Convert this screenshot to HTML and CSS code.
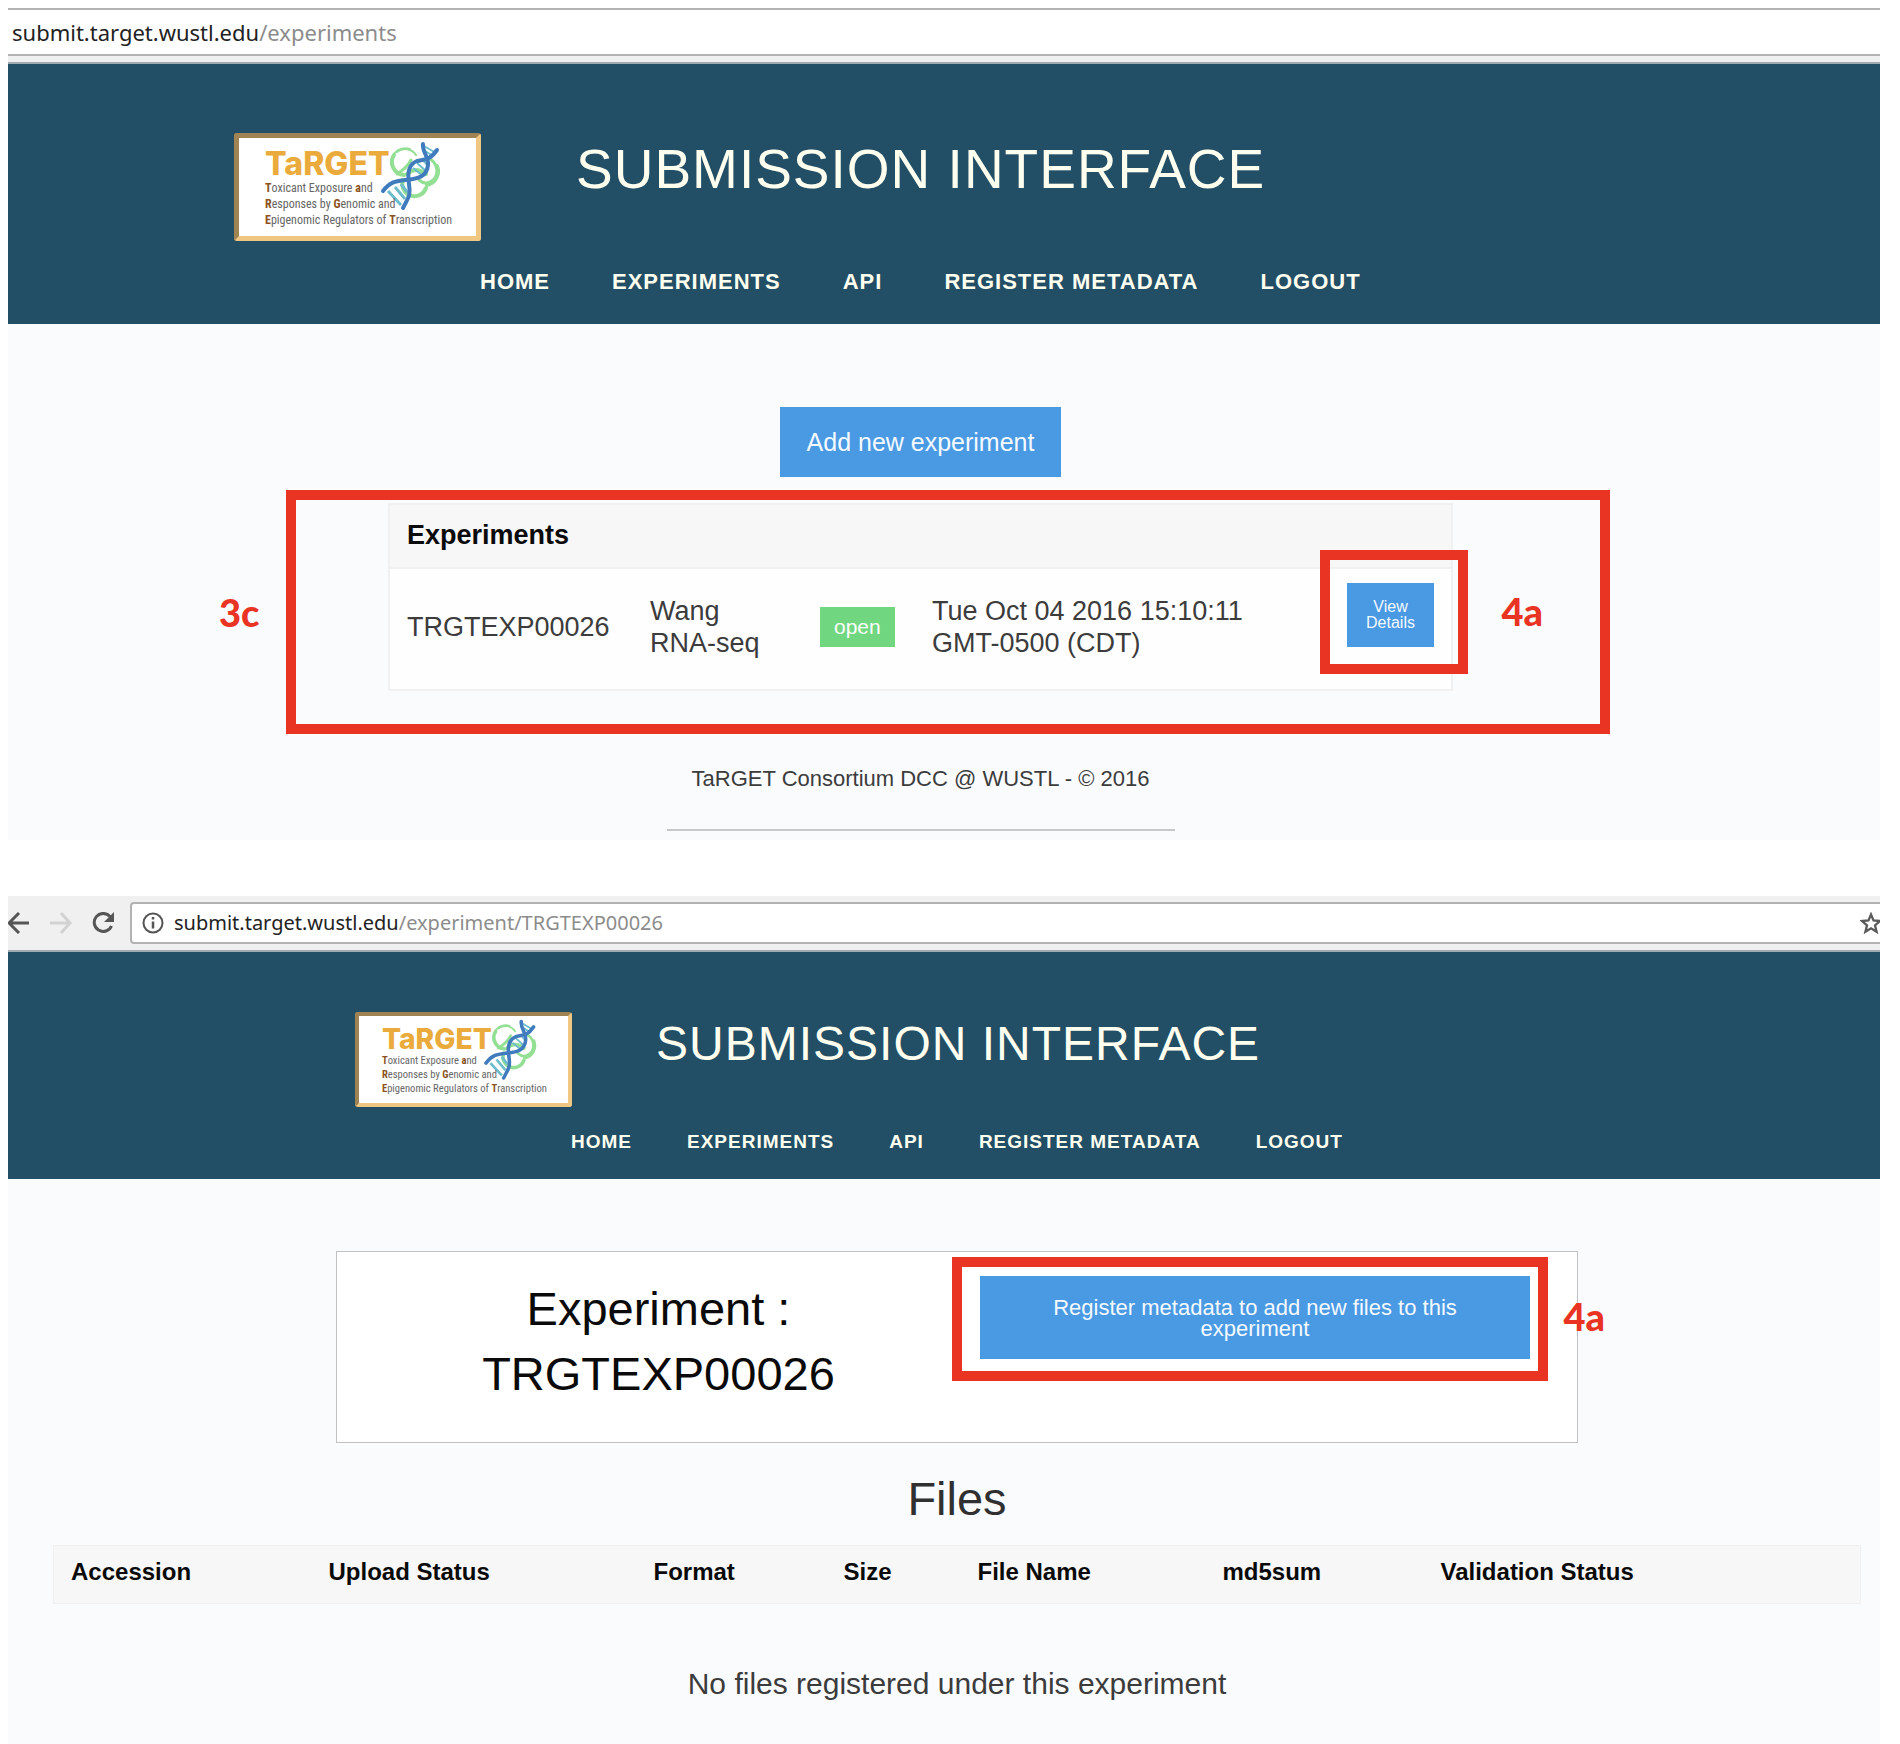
FILE: index.html
```html
<!DOCTYPE html>
<html lang="en">
<head>
<meta charset="utf-8">
<title>TaRGET Submission Interface</title>
<link rel="stylesheet" href="styles.css">
</head>
<body>
<svg class="defs" aria-hidden="true">
  <symbol id="helix" viewBox="0 0 237 98">
    <g fill="none" stroke="#93e094" stroke-linecap="round">
      <path d="M154 31A14 14 0 0 1 171 11" stroke-width="2"/>
      <path d="M155 17A13 13 0 0 0 165 37" stroke-width="4"/>
      <path d="M158 14A13 13 0 0 1 177 17" stroke-width="2"/>
      <path d="M158 36Q168 30 172 22" stroke-width="3"/>
      <path d="M191 21A14 14 0 0 1 196 40Q188 49 180 42" stroke-width="3"/>
      <path d="M198 28A14 14 0 0 1 188 47" stroke-width="4"/>
      <path d="M164 42A12 12 0 1 0 187 50" stroke-width="4"/>
      <path d="M168 36Q177 28 187 36" stroke-width="4"/>
    </g>
    <g stroke="#6cbccb" stroke-width="3">
      <path d="M149 53L162 67M156 49L166 61M162 46L168 54"/>
      <path d="M174 30L184 38M178 25L188 34M184 22L189 28" stroke-width="2"/>
      <path d="M185 8L197 15M186 13L194 18" stroke-width="2"/>
    </g>
    <g fill="none" stroke="#3f7bbd" stroke-width="4" stroke-linecap="round">
      <path d="M144 53C152 43 158 43 166 42C180 41 188 38 189 27C190 19 183 14 184 6"/>
      <path d="M164 70C169 60 172 58 170 46C168 34 170 26 178 23C187 21 191 22 198 12"/>
    </g>
  </symbol>
</svg>

<section class="window list-window">
  <div class="toolbar">
    <div class="address"><span>submit.target.wustl.edu<span class="path">/experiments</span></span></div>
  </div>
  <header class="site-header">
    <div class="brand">
      <svg class="logo" viewBox="0 0 237 98">
        <use href="#helix"/>
        <text class="logo-name" x="26" y="37">TaRGET</text>
        <g class="logo-words">
          <text x="26" y="54"><tspan class="ini">T</tspan>oxicant Exposure <tspan class="ini">a</tspan>nd</text>
          <text x="26" y="70"><tspan class="ini">R</tspan>esponses by <tspan class="ini">G</tspan>enomic and</text>
          <text x="26" y="86"><tspan class="ini">E</tspan>pigenomic Regulators of <tspan class="ini">T</tspan>ranscription</text>
        </g>
      </svg>
      <h1>SUBMISSION INTERFACE</h1>
    </div>
    <nav>
      <a href="#">HOME</a><a href="#">EXPERIMENTS</a><a href="#">API</a><a href="#">REGISTER METADATA</a><a href="#">LOGOUT</a>
    </nav>
  </header>
  <main class="list-page">
    <button class="btn btn-add" type="button">Add new experiment</button>
    <div class="experiments">
      <table class="exp-table">
        <colgroup><col class="c-id"><col class="c-lab"><col class="c-state"><col class="c-date"><col class="c-act"></colgroup>
        <thead><tr><th colspan="5">Experiments</th></tr></thead>
        <tbody>
          <tr>
            <td>TRGTEXP00026</td>
            <td>Wang<br>RNA-seq</td>
            <td><span class="badge">open</span></td>
            <td>Tue Oct 04 2016 15:10:11<br>GMT-0500 (CDT)</td>
            <td class="action"><button class="btn btn-view" type="button">View<br>Details</button></td>
          </tr>
        </tbody>
      </table>
      <div class="frame frame-list"></div>
      <div class="frame frame-view"></div>
      <span class="mark mark-list">3c</span>
      <span class="mark mark-view">4a</span>
    </div>
    <footer>TaRGET Consortium DCC @ WUSTL - © 2016</footer>
    <hr>
  </main>
</section>

<section class="window detail-window">
  <div class="toolbar">
    <button class="tool" type="button" aria-label="Back"><svg viewBox="0 0 22 22"><path d="M21 11H2M11 1L1 11L11 21" fill="none" stroke="#555" stroke-width="3"/></svg></button>
    <button class="tool" type="button" aria-label="Forward"><svg viewBox="0 0 22 22"><path d="M0 11H19M11 1L20 11L11 21" fill="none" stroke="#d2d2d2" stroke-width="3"/></svg></button>
    <button class="tool" type="button" aria-label="Reload"><svg viewBox="0 0 22 22"><path d="M18 4.500A9 9 0 1 0 19.500 14" fill="none" stroke="#555" stroke-width="3"/><path d="M22 0V10H12Z" fill="#555"/></svg></button>
    <div class="address">
      <svg class="info" viewBox="0 0 22 22"><circle cx="11" cy="11" r="9.500" fill="none" stroke="#555" stroke-width="2"/><path d="M11 9.500V16.500M11 5V7.500" stroke="#555" stroke-width="2.500"/></svg>
      <span>submit.target.wustl.edu<span class="path">/experiment/TRGTEXP00026</span></span>
      <svg class="star" viewBox="0 0 22 22"><path d="M11 2.500L13.500 8.500L20 9L15 13.300L16.600 19.800L11 16.300L5.400 19.800L7 13.300L2 9L8.500 8.500Z" fill="none" stroke="#5a5a5a" stroke-width="2.300"/></svg>
    </div>
  </div>
  <header class="site-header">
    <div class="brand">
      <svg class="logo" viewBox="0 0 237 98">
        <use href="#helix"/>
        <text class="logo-name" x="26" y="37">TaRGET</text>
        <g class="logo-words">
          <text x="26" y="54"><tspan class="ini">T</tspan>oxicant Exposure <tspan class="ini">a</tspan>nd</text>
          <text x="26" y="70"><tspan class="ini">R</tspan>esponses by <tspan class="ini">G</tspan>enomic and</text>
          <text x="26" y="86"><tspan class="ini">E</tspan>pigenomic Regulators of <tspan class="ini">T</tspan>ranscription</text>
        </g>
      </svg>
      <h1>SUBMISSION INTERFACE</h1>
    </div>
    <nav>
      <a href="#">HOME</a><a href="#">EXPERIMENTS</a><a href="#">API</a><a href="#">REGISTER METADATA</a><a href="#">LOGOUT</a>
    </nav>
  </header>
  <main class="detail-page">
    <div class="summary">
      <h2>Experiment :<br>TRGTEXP00026</h2>
      <div class="register">
        <button class="btn btn-register" type="button">Register metadata to add new files to this<br>experiment</button>
        <div class="frame frame-register"></div>
        <span class="mark mark-register">4a</span>
      </div>
    </div>
    <h2 class="files-title">Files</h2>
    <table class="files-table">
      <colgroup><col class="f-acc"><col class="f-up"><col class="f-fmt"><col class="f-size"><col class="f-name"><col class="f-md5"><col></colgroup>
      <thead><tr><th>Accession</th><th>Upload Status</th><th>Format</th><th>Size</th><th>File Name</th><th>md5sum</th><th>Validation Status</th></tr></thead>
    </table>
    <p class="empty">No files registered under this experiment</p>
  </main>
</section>
</body>
</html>
```
FILE: styles.css
```css
* { box-sizing: border-box; }

body {
  margin: 0;
  padding: 8px 20px 0 8px;
  background: #fff;
  color: #3c3c3c;
  font-family: "Liberation Sans", Arial, sans-serif;
}

h1, h2, p { margin: 0; font-weight: 400; }

button { border: 0; padding: 0; font-family: inherit; }

.defs { display: block; width: 0; height: 0; }

.window { overflow: hidden; background: #fafbfd; }

/* browser bar */
.toolbar {
  display: flex;
  background: #f0f0f0;
  border-bottom: 2px solid #9fabb1;
}

.address {
  flex: 1;
  display: flex;
  align-items: center;
  background: #fff;
  border: 2px solid #b2b2b2;
  color: #222;
  font-family: "Noto Sans", "Open Sans", sans-serif;
  white-space: nowrap;
}

.path { color: #8c8c8c; }

.list-window .toolbar { padding-bottom: 6px; }

.list-window .address {
  height: 48px;
  padding-left: 4px;
  border-width: 2px 0;
  font-size: 22px;
}

.detail-window { margin-top: 56px; }

.detail-window .toolbar {
  height: 56px;
  padding: 6px 0 7px;
  align-items: center;
}

.tool {
  width: 22px;
  height: 22px;
  margin-right: 20px;
  background: none;
}

.tool svg, .info, .star { display: block; width: 22px; height: 22px; }

.detail-window .address {
  height: 42px;
  margin-left: -4px;
  margin-right: -4px;
  padding-left: 10px;
  gap: 10px;
  border-radius: 4px;
  font-size: 20px;
}

.star { margin-left: auto; }

/* site header */
.site-header { background: #224e66; color: #fffff0; }

.brand { display: flex; align-items: flex-start; }

.logo {
  flex: none;
  border-style: solid;
  border-color: #9f8353 #efc783 #efc783 #9f8353;
  border-radius: 3px;
  background: #fff;
}

.logo-name {
  font: 800 32px Inter, sans-serif;
  fill: #eaab3c;
}

.logo-words {
  font: 12px "Liberation Sans Narrow", "Roboto Condensed", "Liberation Sans", sans-serif;
  fill: #666;
}

.ini { font-weight: 700; fill: #8a5220; }

nav { display: flex; font-weight: 700; letter-spacing: 1px; }

nav a { color: inherit; text-decoration: none; }

h1 { letter-spacing: 1px; white-space: nowrap; }

.list-window .site-header { padding: 69px 0 29px 226px; }
.list-window .logo { width: 247px; height: 108px; border-width: 5px; }
.list-window .brand { gap: 95px; }
.list-window h1 { font-size: 55px; line-height: 72px; }
.list-window nav { gap: 62px; margin: 28px 0 0 246px; font-size: 22px; line-height: 26px; }

.detail-window .site-header { padding: 60px 0 26px 347px; }
.detail-window .logo { width: 217px; height: 95px; border-width: 4px; }
.detail-window .brand { gap: 84px; }
.detail-window h1 { font-size: 48px; line-height: 64px; }
.detail-window nav { gap: 55px; margin: 24px 0 0 216px; font-size: 19px; line-height: 22px; }

.btn { background: #4a9ae3; color: #f4f9ff; }

/* experiment list */
.list-page {
  display: flex;
  flex-direction: column;
  align-items: center;
  padding: 83px 47px 9px 0;
}

.btn-add { padding: 0 27px; height: 70px; font-size: 25px; }

.experiments { position: relative; width: 1065px; margin-top: 26px; }

table { width: 100%; border-collapse: collapse; table-layout: fixed; }

th { background: #f7f7f7; color: #0a0a0a; text-align: left; }

.exp-table { background: #fefefe; font-size: 27px; line-height: 32px; }
.exp-table th { padding: 0 0 2px 17px; }
.exp-table td { padding: 0 0 4px 17px; }
.exp-table thead tr { height: 64px; }
.exp-table tbody tr { height: 122px; }
.exp-table, .exp-table thead { border: 2px solid #f1f1f1; }

.c-id { width: 244px; }
.c-lab { width: 170px; }
.c-state { width: 112px; }
.c-date { width: 415px; }

.badge {
  display: inline-block;
  padding: 4px 14px;
  background: #70d67f;
  color: #fefefe;
  font-size: 21px;
}

.exp-table .action { padding-top: 14px; vertical-align: top; }

.btn-view { display: block; width: 87px; height: 64px; font-size: 16px; line-height: 16px; }

footer { margin-top: 75px; font-size: 22px; line-height: 26px; }

hr { width: 508px; height: 2px; margin: 37px 0 0; border: 0; background: #c6c8ca; }

/* callouts drawn over the pages */
.frame { position: absolute; border: 10px solid #e93323; pointer-events: none; }

.mark {
  position: absolute;
  color: #e93323;
  font: 900 38px/44px Lato, sans-serif;
}

.frame-list { inset: -13px -157px -43px -102px; }
.frame-view { top: 47px; right: -15px; width: 148px; height: 124px; }
.mark-list { top: 87px; left: -169px; }
.mark-view { top: 86px; right: -90px; }
.frame-register { inset: -19px -18px -22px -28px; }
.mark-register { top: 18px; right: -75px; }

/* experiment detail */
.detail-page { padding: 72px 19px 42px 45px; }

.summary {
  display: grid;
  grid-template-columns: 643px 1fr;
  align-items: start;
  max-width: 1242px;
  margin: 0 auto;
  padding: 24px 47px 36px 0;
  border: 1px solid #bfc1c3;
  background: #fff;
}

.summary h2 { color: #0a0a0a; font-size: 47px; line-height: 65px; text-align: center; }

.register { position: relative; }

.btn-register { display: block; width: 100%; height: 83px; font-size: 22px; line-height: 21px; }

.files-title { margin: 24px 0 14px; font-size: 47px; line-height: 64px; color: #303030; text-align: center; }

.files-table { border: 1px solid #f0f0f1; font-size: 24px; line-height: 28px; }
.files-table th { padding: 12px 0 17px 17px; }

.f-acc { width: 258px; }
.f-up { width: 325px; }
.f-fmt { width: 190px; }
.f-size { width: 134px; }
.f-name { width: 245px; }
.f-md5 { width: 218px; }

.empty { margin-top: 62px; font-size: 30px; line-height: 36px; text-align: center; }
```
